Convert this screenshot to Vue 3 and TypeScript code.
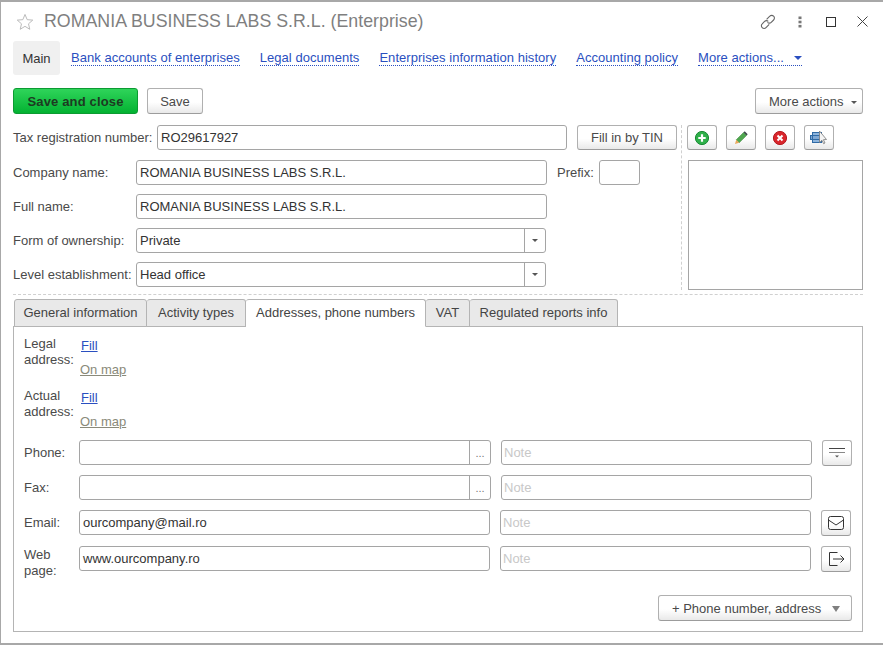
<script setup lang="ts">
const navLinks = ['Bank accounts of enterprises', 'Legal documents', 'Enterprises information history', 'Accounting policy']
const tabs = [
  { name: 'General information', width: 133 },
  { name: 'Activity types', width: 99 },
  { name: 'Addresses, phone numbers', width: 180 },
  { name: 'VAT', width: 44 },
  { name: 'Regulated reports info', width: 148 },
]
const activeTab = 'Addresses, phone numbers'
</script>

<template>
  <div class="window">
    <header class="title-bar">
      <svg class="star" width="18" height="18" viewBox="0 0 20 20">
        <path d="M10 1.6l2.4 5.8 6.2.5-4.7 4.1 1.4 6.1-5.3-3.3-5.3 3.3 1.4-6.1L1.400 7.900l6.200-.5z" fill="#fff" stroke="#b4b4b4" />
      </svg>
      <h1 class="title">ROMANIA BUSINESS LABS S.R.L. (Enterprise)</h1>
      <div class="window-icons">
        <svg width="18" height="18" viewBox="0 0 18 18" fill="none" stroke="#666" stroke-width="1.1">
          <path d="M7.6 6.4l3.2-3.2a2.6 2.6 0 0 1 3.8 0 2.6 2.6 0 0 1 0 3.8l-2.4 2.4a2.6 2.6 0 0 1-3.7 0" />
          <path d="M10.2 11.4L7 14.6a2.6 2.6 0 0 1-3.8 0 2.6 2.6 0 0 1 0-3.8l2.4-2.4a2.6 2.6 0 0 1 3.7 0" />
        </svg>
        <svg class="dots" width="4" height="12" viewBox="0 0 4 12" fill="#777">
          <rect x="0.5" y="0.5" width="3" height="2.6" />
          <rect x="0.5" y="4.7" width="3" height="2.6" />
          <rect x="0.5" y="8.9" width="3" height="2.6" />
        </svg>
        <svg width="10" height="10" viewBox="0 0 10 10" fill="none" stroke="#333">
          <rect x="0.5" y="0.5" width="9" height="9" />
        </svg>
        <svg width="11" height="11" viewBox="0 0 11 11" fill="none" stroke="#444">
          <path d="M0.5 0.5l10 10M10.5 0.5l-10 10" />
        </svg>
      </div>
    </header>

    <nav class="nav">
      <span class="nav-main">Main</span>
      <a v-for="link in navLinks" :key="link" class="nav-link">{{ link }}</a>
      <a class="nav-link nav-more">More actions... <i class="nav-caret" /></a>
    </nav>

    <div class="toolbar">
      <button class="btn btn-primary">Save and close</button>
      <button class="btn btn-save">Save</button>
      <button class="btn btn-more">More actions<i class="caret" /></button>
    </div>

    <section class="head">
      <div class="head-fields">
        <div class="row row-tax">
          <label class="w144">Tax registration number:</label>
          <div class="input tax-input">RO29617927</div>
          <button class="btn btn-tin">Fill in by TIN</button>
        </div>
        <div class="row">
          <label class="w123">Company name:</label>
          <div class="input w411">ROMANIA BUSINESS LABS S.R.L.</div>
          <label class="prefix-label">Prefix:</label>
          <div class="input prefix-input" />
        </div>
        <div class="row">
          <label class="w123">Full name:</label>
          <div class="input w411">ROMANIA BUSINESS LABS S.R.L.</div>
        </div>
        <div class="row">
          <label class="w123">Form of ownership:</label>
          <div class="input w410 split">
            <span class="split-text">Private</span>
            <span class="split-btn"><i class="caret" /></span>
          </div>
        </div>
        <div class="row">
          <label class="w123">Level establishment:</label>
          <div class="input w410 split">
            <span class="split-text">Head office</span>
            <span class="split-btn"><i class="caret" /></span>
          </div>
        </div>
      </div>

      <aside class="head-side">
        <div class="side-tools">
          <button class="btn tool">
            <svg width="16" height="16" viewBox="0 0 16 16">
              <circle cx="8" cy="8" r="6.6" fill="#2fb04a" stroke="#1a8a35" />
              <path d="M8 4.300v7.400M4.300 8h7.400" stroke="#fff" stroke-width="2.2" />
            </svg>
          </button>
          <button class="btn tool">
            <svg width="16" height="16" viewBox="0 0 16 16">
              <path d="M3.200 9.800l7.300-7.300 3 3-7.300 7.300z" fill="#4fa64f" stroke="#3c8a3c" stroke-width="0.5" />
              <path d="M10.500 2.500l1.200-1.200 3 3-1.200 1.200z" fill="#3d4a4a" />
              <path d="M3.200 9.800l3 3-4.200 1.200z" fill="#e9a75a" />
            </svg>
          </button>
          <button class="btn tool">
            <svg width="16" height="16" viewBox="0 0 16 16">
              <circle cx="8" cy="8" r="6.6" fill="#d9262c" stroke="#b51c22" />
              <path d="M5.500 5.500l5 5M10.500 5.500l-5 5" stroke="#fff" stroke-width="2" />
            </svg>
          </button>
          <button class="btn tool">
            <svg width="18" height="18" viewBox="0 0 18 18">
              <rect x="0.500" y="6.500" width="3" height="4" fill="#7fa8d4" stroke="#2f6aa5" />
              <rect x="2.500" y="3.500" width="9" height="3" fill="#8db4dc" stroke="#2f6aa5" />
              <rect x="2.500" y="6.500" width="9" height="4" fill="#7fa8d4" stroke="#2f6aa5" />
              <rect x="2.500" y="10.500" width="9" height="3" fill="#8db4dc" stroke="#2f6aa5" />
              <path d="M9.500 2v11.500l2.500-2.200 1.600 3.400 1.400-.7-1.600-3.300 3.100-.2z" fill="#f4f4f4" stroke="#777" stroke-width="0.8" />
            </svg>
          </button>
        </div>
        <div class="picture" />
      </aside>
    </section>

    <div class="tabs">
      <span
        v-for="tab in tabs"
        :key="tab.name"
        class="tab"
        :class="{ active: tab.name === activeTab }"
        :style="{ width: `${tab.width}px` }"
      >{{ tab.name }}</span>
    </div>

    <section class="panel">
      <div class="addr">
        <label class="addr-label">Legal<br />address:</label>
        <div class="addr-links">
          <a class="link-fill">Fill</a>
          <a class="link-map">On map</a>
        </div>
      </div>
      <div class="addr">
        <label class="addr-label">Actual<br />address:</label>
        <div class="addr-links">
          <a class="link-fill">Fill</a>
          <a class="link-map">On map</a>
        </div>
      </div>

      <div class="contact">
        <label>Phone:</label>
        <div class="input w412 split">
          <span class="split-text" />
          <span class="dots-btn">...</span>
        </div>
        <div class="input note">Note</div>
        <button class="btn icon-btn">
          <svg width="18" height="12" viewBox="0 0 18 12" fill="none" stroke="#444">
            <path d="M1 1.500h16" />
            <path d="M1 5.500h16" stroke="#888" />
            <path d="M7 8.500h4l-2 2z" fill="#555" stroke="none" />
          </svg>
        </button>
      </div>
      <div class="contact contact-next">
        <label>Fax:</label>
        <div class="input w412 split">
          <span class="split-text" />
          <span class="dots-btn">...</span>
        </div>
        <div class="input note">Note</div>
      </div>
      <div class="contact contact-next">
        <label>Email:</label>
        <div class="input w411">ourcompany@mail.ro</div>
        <div class="input note">Note</div>
        <button class="btn icon-btn">
          <svg width="18" height="16" viewBox="0 0 18 16" fill="none" stroke="#333">
            <rect x="1.500" y="1.500" width="15" height="13" rx="2" />
            <path d="M1.500 5L9 10l7.500-5" />
          </svg>
        </button>
      </div>
      <div class="contact contact-web">
        <label>Web<br />page:</label>
        <div class="input w411">www.ourcompany.ro</div>
        <div class="input note">Note</div>
        <button class="btn icon-btn">
          <svg width="18" height="16" viewBox="0 0 18 16" fill="none" stroke="#333">
            <path d="M10.500 1.500h-8v13h8" />
            <path d="M6 8h11M13.500 4.500L17 8l-3.500 3.500" />
          </svg>
        </button>
      </div>

      <div class="panel-foot">
        <button class="btn btn-add">+ Phone number, address<i class="add-caret" /></button>
      </div>
    </section>
  </div>
</template>

<style scoped>
.window {
  box-sizing: border-box;
  width: 883px;
  height: 645px;
  padding: 0 20px 0 12px;
  border-top: 2px solid #a8a8a8;
  border-left: 1px solid #a8a8a8;
  border-bottom: 2px solid #a8a8a8;
  background: #fff;
  color: #4a4a4a;
  font-family: "Liberation Sans", Arial, sans-serif;
  font-size: 13px;
  overflow: hidden;
}

.title-bar {
  display: flex;
  align-items: center;
  height: 39px;
}

.star {
  margin: 0 10px 0 3px;
  flex: none;
}

.title {
  margin: 0;
  font-size: 17.8px;
  font-weight: 400;
  color: #7f7f7f;
  white-space: nowrap;
}

.window-icons {
  display: flex;
  align-items: center;
  margin-left: auto;
  margin-right: -5px;
  gap: 21px;
}

.dots {
  margin-right: 3px;
}

.nav {
  display: flex;
  align-items: center;
  height: 34px;
  white-space: nowrap;
}

.nav-main {
  display: flex;
  align-items: center;
  justify-content: center;
  width: 47px;
  height: 34px;
  margin-right: 11px;
  border-radius: 3px;
  background: #f0f0f0;
  color: #333;
}

.nav-link {
  margin-right: 20px;
  color: #2a4fc0;
  border-bottom: 1px dotted #2a4fc0;
  line-height: 15px;
  letter-spacing: 0.04px;
}

.nav-more {
  margin-right: 0;
}

.nav-caret {
  display: inline-block;
  margin-left: 6px;
  vertical-align: 2px;
  border: 4px solid transparent;
  border-top: 4px solid #2a4fc0;
  border-bottom: 0;
}

.caret {
  display: inline-block;
  border: 3px solid transparent;
  border-top: 3px solid #555;
  border-bottom: 0;
}

.btn {
  box-sizing: border-box;
  height: 26px;
  padding: 0;
  border: 1px solid #b0b0b0;
  border-bottom-color: #9c9c9c;
  border-radius: 3px;
  background: linear-gradient(#fff 55%, #e9e9e9);
  color: #4a4a4a;
  font: inherit;
  white-space: nowrap;
}

.toolbar {
  display: flex;
  align-items: center;
  margin-top: 13px;
  gap: 9px;
}

.btn-primary {
  width: 125px;
  border-color: #0c9b32;
  background: linear-gradient(#2fd45a, #03b232);
  color: #1d3a22;
  font-weight: 700;
  letter-spacing: 0.15px;
}

.btn-save {
  width: 56px;
}

.btn-more {
  display: flex;
  align-items: center;
  width: 108px;
  margin-left: auto;
  padding-left: 13px;
}

.btn-more .caret {
  margin-left: 8px;
  margin-top: 2px;
}

.head {
  display: flex;
  margin-top: 11px;
  padding-bottom: 4px;
  border-bottom: 1px dashed #d0d0d0;
}

.head-fields {
  width: 664px;
  display: flex;
  flex-direction: column;
  gap: 9px;
}

.row {
  display: flex;
  align-items: center;
  height: 25px;
  white-space: nowrap;
}

.row label {
  flex: none;
}

.input {
  box-sizing: border-box;
  height: 25px;
  line-height: 23px;
  padding: 0 3px;
  border: 1px solid #a5a5a5;
  border-radius: 3px;
  background: #fff;
  color: #333;
  white-space: nowrap;
  flex: none;
}

.row-tax {
  margin-bottom: 1px;
}

.w144 {
  width: 144px;
}

.tax-input {
  width: 410px;
}

.btn-tin {
  width: 100px;
  height: 25px;
  margin-left: 10px;
}

.w123 {
  width: 123px;
}

.w411 {
  width: 411px;
}

.w410 {
  width: 410px;
}

.w412 {
  width: 412px;
}

.prefix-label {
  margin-left: 10px;
}

.prefix-input {
  width: 41px;
  margin-left: 5px;
}

.split {
  display: flex;
  padding: 0 0 0 3px;
}

.split-text {
  flex: 1;
}

.split-btn {
  display: flex;
  align-items: center;
  justify-content: center;
  box-sizing: border-box;
  width: 21px;
  border-left: 1px solid #a5a5a5;
}

.dots-btn {
  box-sizing: border-box;
  width: 21px;
  text-align: center;
  border-left: 1px solid #a5a5a5;
  color: #777;
  font-size: 11px;
  line-height: 25px;
}

.head-side {
  flex: 1;
  height: 165px;
  padding-left: 5px;
  border-left: 1px dashed #d0d0d0;
  margin-left: 4px;
}

.side-tools {
  display: flex;
  gap: 9px;
}

.tool {
  display: flex;
  align-items: center;
  justify-content: center;
  width: 30px;
  height: 25px;
}

.picture {
  box-sizing: border-box;
  height: 130px;
  margin-top: 10px;
  margin-left: 1px;
  border: 1px solid #a5a5a5;
}

.tabs {
  display: flex;
  margin-top: 4px;
  margin-left: 1px;
  height: 27px;
}

.tab {
  display: flex;
  align-items: center;
  justify-content: center;
  box-sizing: border-box;
  height: 28px;
  padding-bottom: 2px;
  border: 1px solid #b4b4b4;
  border-left-width: 0;
  border-radius: 3px 3px 0 0;
  background: #e9e9e9;
  color: #444;
  white-space: nowrap;
}

.tab:first-child {
  border-left-width: 1px;
}

.tab.active {
  position: relative;
  z-index: 1;
  border-bottom-color: #fff;
  background: #fff;
}

.panel {
  box-sizing: border-box;
  height: 306px;
  padding: 9px 10px 0;
  border: 1px solid #b4b4b4;
}

.addr {
  display: flex;
  height: 52px;
}

.addr-label {
  width: 56px;
  line-height: 16px;
}

.addr-links {
  display: flex;
  flex-direction: column;
  align-items: flex-start;
  gap: 8px;
  padding-top: 2px;
  line-height: 16px;
}

.link-fill {
  margin-left: 1px;
  color: #2a4fc0;
  text-decoration: underline;
}

.link-map {
  color: #8a8a7a;
  text-decoration: underline;
}

.contact {
  display: flex;
  align-items: center;
  height: 25px;
}

.contact label {
  width: 55px;
  flex: none;
  line-height: 16px;
}

.contact-next {
  margin-top: 10px;
}

.contact-web {
  margin-top: 11px;
}

.contact-web label {
  margin-top: 8px;
}

.note {
  width: 311px;
  margin-left: 10px;
  padding-left: 2px;
  color: #c8c8c8;
}

.icon-btn {
  display: flex;
  align-items: center;
  justify-content: center;
  width: 30px;
  flex: none;
  margin-left: 10px;
}

.panel-foot {
  display: flex;
  justify-content: flex-end;
  margin-top: 24px;
}

.btn-add {
  display: flex;
  align-items: center;
  width: 194px;
  padding-left: 13px;
}

.add-caret {
  display: inline-block;
  margin-left: 11px;
  margin-top: 1px;
  border: 4.500px solid transparent;
  border-top: 6px solid #808080;
  border-bottom: 0;
}
</style>

<style>
html,
body {
  margin: 0;
  background: #fff;
}
</style>
